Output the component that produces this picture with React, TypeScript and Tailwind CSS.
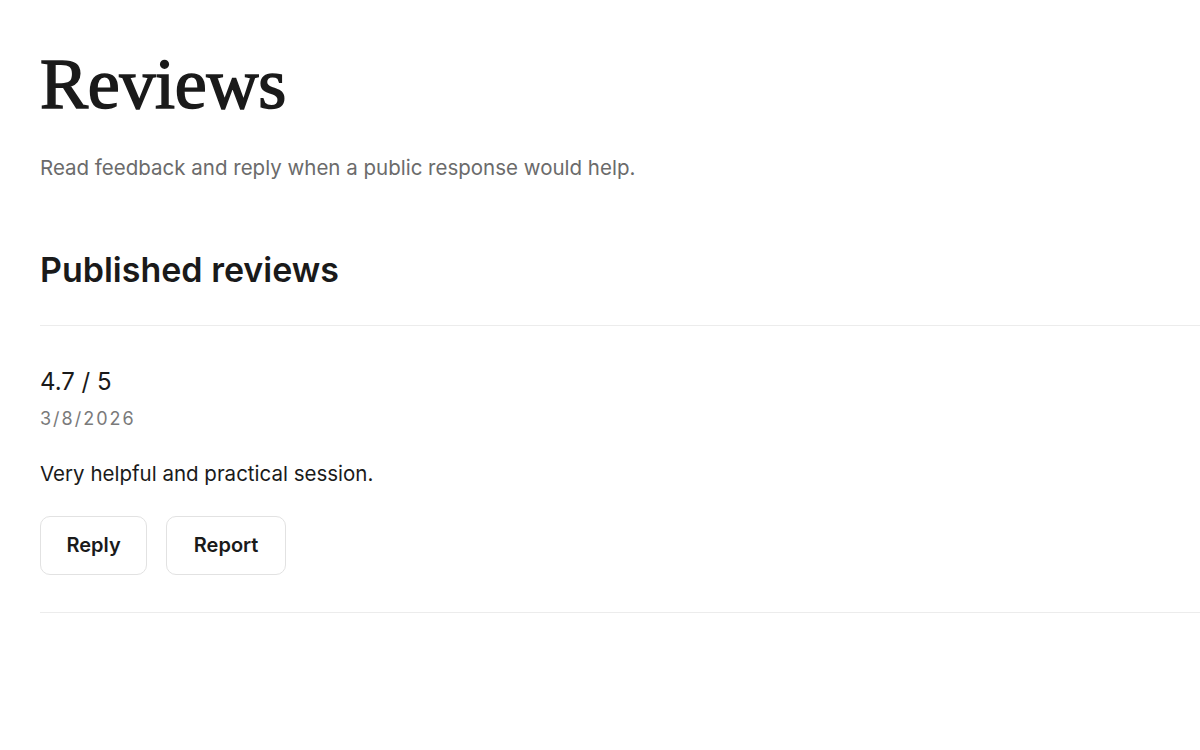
import React from 'react';

const reviews = [
    { id: 1, score: '4.7 / 5', date: '3/8/2026', text: 'Very helpful and practical session.' },
];

const App: React.FC = () => {
    return (
        <div className="min-h-screen bg-white text-[#1a1a1a] font-['Inter',sans-serif] pl-10 pt-12">
            <h1 className="font-['Liberation_Serif',serif] text-[72px] leading-none tracking-[-0.3px] [-webkit-text-stroke:1.6px_#1a1a1a]">Reviews</h1>
            <p className="mt-[33px] text-[20.5px] text-[#6b6b6b]">Read feedback and reply when a public response would help.</p>

            <h2 className="mt-[61px] text-[34px] leading-[50px] font-semibold">Published reviews</h2>

            <div className="mt-[30px] border-t border-[#ececec]">
                {reviews.map((r) => (
                    <div key={r.id} className="pt-[38px] pb-[37px] border-b border-[#ececec]">
                        <div className="text-[24px]">{r.score}</div>
                        <div className="mt-[5px] text-[18px] tracking-[2px] text-[#7a7a7a]">{r.date}</div>
                        <p className="mt-[27px] text-[20.5px]">{r.text}</p>
                        <div className="mt-[26px] flex gap-[19px]">
                            <button className="h-[59px] px-[25.5px] rounded-[10px] border border-[#e2e2e2] text-[20px] font-semibold">Reply</button>
                            <button className="h-[59px] px-[26.5px] rounded-[10px] border border-[#e2e2e2] text-[20px] font-semibold">Report</button>
                        </div>
                    </div>
                ))}
            </div>
        </div>
    );
};

export default App;
